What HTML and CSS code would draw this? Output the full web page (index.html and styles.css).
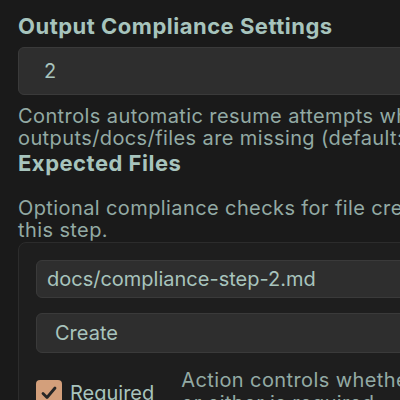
FILE: index.html
```html
<!DOCTYPE html>
<html>
<head>
<meta charset="utf-8">
<link rel="stylesheet" href="styles.css">
</head>
<body>
<div class="page">
  <h2 class="section-title">Output Compliance Settings</h2>
  <div class="field field-lg">2</div>
  <p class="help">Controls automatic resume attempts when required<br>outputs/docs/files are missing (default: 2).</p>
  <h3 class="section-title">Expected Files</h3>
  <p class="help help-files">Optional compliance checks for file creation during<br>this step.</p>
  <div class="card">
    <div class="field field-sm">docs/compliance-step-2.md</div>
    <div class="field field-select">Create</div>
    <div class="check-row">
      <label class="check">
        <span class="box"><svg width="20" height="20" viewBox="0 0 20 20"><path d="M4 10.5 L8 14.5 L16 5" fill="none" stroke="#262626" stroke-width="2.8" stroke-linecap="round" stroke-linejoin="round"/></svg></span>
        <span class="check-label">Required</span>
      </label>
      <p class="hint">Action controls whether the file is created, modified,<br>or either is required.</p>
    </div>
  </div>
</div>
</body>
</html>
```
FILE: styles.css
```css
html, body {
  margin: 0;
  padding: 0;
  background: #1a1a1a;
  overflow: hidden;
}
.page {
  width: 760px;
  padding: 12px 0 0 18px;
  font-family: Inter, "Noto Sans", sans-serif;
  color: #a6c2bb;
}
.section-title {
  margin: 0;
  font-size: 22px;
  font-weight: 700;
  line-height: 28px;
  color: #a7c4bd;
  letter-spacing: 0.5px;
}
.field {
  box-sizing: border-box;
  background: #2e2e2e;
  border: 1px solid #3a3a3a;
  border-radius: 6px;
  color: #a8c4bd;
  font-size: 20px;
  display: flex;
  align-items: center;
}
.field-lg {
  margin-top: 7px;
  height: 48px;
  padding-left: 25px;
}
.help {
  margin: 10px 0 0;
  font-size: 20px;
  line-height: 22px;
  color: #93aaa4;
  letter-spacing: 0.4px;
  white-space: nowrap;
}
.help-files {
  margin-top: 20px;
}
.card {
  margin-top: 1px;
  background: #1e1e1e;
  border: 1px solid #2c2c2c;
  border-radius: 8px;
  padding: 17px 17px 20px;
}
.field-sm {
  height: 38px;
  padding-left: 10px;
}
.field-select {
  margin-top: 15px;
  height: 40px;
  padding-left: 18px;
}
.check-row {
  display: flex;
  align-items: flex-start;
  gap: 27px;
  margin-top: 16px;
}
.check {
  display: flex;
  align-items: center;
  gap: 8px;
  margin-top: 11px;
}
.box {
  width: 26px;
  height: 26px;
  border-radius: 4px;
  background: #d39f7b;
  display: flex;
  align-items: center;
  justify-content: center;
}
.check-label {
  font-size: 20px;
  color: #a8c4bd;
}
.hint {
  margin: 0;
  font-size: 20px;
  line-height: 23px;
  color: #93aaa4;
  letter-spacing: 0.4px;
  white-space: nowrap;
}
```
